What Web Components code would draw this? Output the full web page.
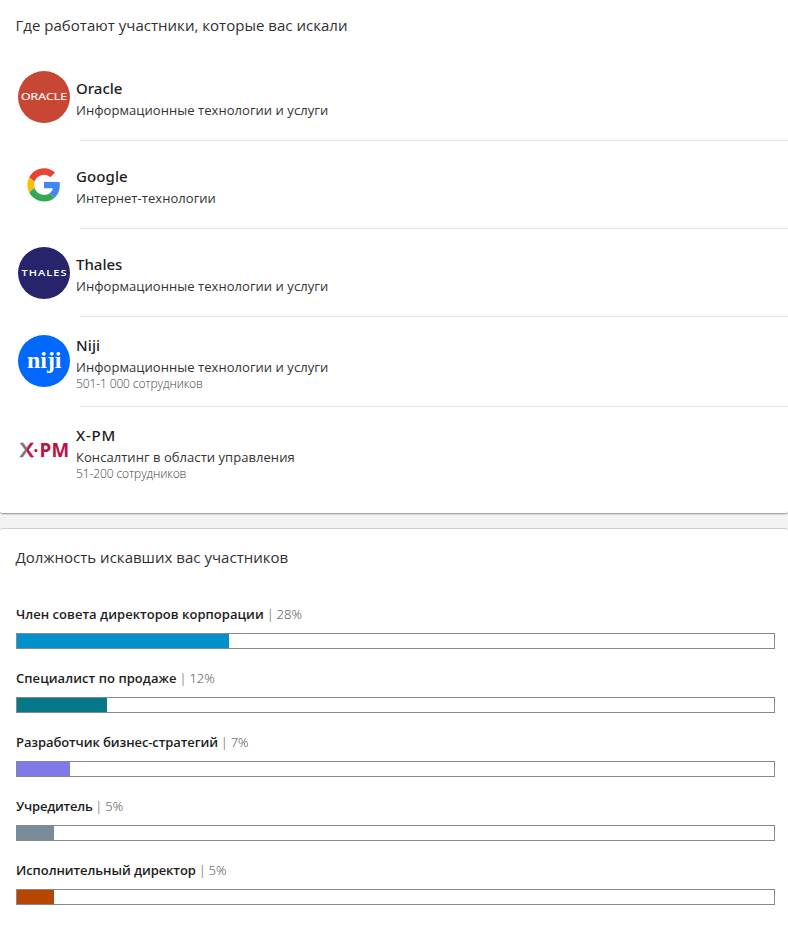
<!DOCTYPE html>
<html lang="ru">
<head>
<meta charset="utf-8">
<title>Статистика поиска</title>
<style>
  body {
    margin: 0;
    background: #f3f3f3;
    color: #1d1d1d;
    font-family: "Open Sans", "Noto Sans", sans-serif;
  }
</style>
</head>
<body>
<search-insights></search-insights>

<script>
const LOGOS = {
  oracle: `
    <circle cx="26" cy="26" r="26" fill="#c74634"/>
    <text x="3" y="29.2" font-size="8.4" textLength="46" lengthAdjust="spacingAndGlyphs" fill="#fff" stroke="#fff" stroke-width=".15">ORACLE</text>`,
  google: `
    <g transform="translate(9.4 9.3) scale(.69)">
      <path fill="#EA4335" d="M24 9.5c3.54 0 6.71 1.22 9.21 3.6l6.85-6.85C35.9 2.38 30.47 0 24 0 14.62 0 6.51 5.38 2.56 13.22l7.98 6.19C12.43 13.72 17.74 9.5 24 9.5z"/>
      <path fill="#4285F4" d="M46.98 24.55c0-1.57-.15-3.09-.38-4.55H24v9.02h12.94c-.58 2.96-2.26 5.48-4.78 7.18l7.73 6c4.51-4.18 7.09-10.36 7.09-17.65z"/>
      <path fill="#FBBC05" d="M10.53 28.59c-.48-1.45-.76-2.99-.76-4.59s.27-3.14.76-4.59l-7.98-6.19C.92 16.46 0 20.12 0 24c0 3.88.92 7.54 2.56 10.78l7.97-6.19z"/>
      <path fill="#34A853" d="M24 48c6.48 0 11.93-2.13 15.89-5.81l-7.73-6c-2.15 1.45-4.92 2.3-8.16 2.3-6.26 0-11.57-4.22-13.47-9.91l-7.98 6.19C6.51 42.62 14.62 48 24 48z"/>
    </g>`,
  thales: `
    <circle cx="26" cy="26" r="26" fill="#28246b"/>
    <text x="3.5" y="28.9" font-size="8.2" font-weight="600" letter-spacing=".8" textLength="46" lengthAdjust="spacingAndGlyphs" fill="#fff">THALES</text>`,
  niji: `
    <circle cx="26" cy="26" r="26" fill="#0068ff"/>
    <text x="9" y="32.7" font-family="Liberation Serif, serif" font-size="24" font-weight="700" textLength="34.5" lengthAdjust="spacingAndGlyphs" fill="#fff">niji</text>`,
  xpm: `
    <defs>
      <linearGradient id="x" x1="0" x2="1">
        <stop offset=".5" stop-color="#77777b"/>
        <stop offset=".5" stop-color="#c0103f"/>
      </linearGradient>
    </defs>
    <g font-family="Open Sans, sans-serif" font-size="19" font-weight="700">
      <text x="1.8" y="32" font-weight="600" textLength="14" lengthAdjust="spacingAndGlyphs" fill="url(#x)" stroke="url(#x)" stroke-width=".4">X</text>
      <text x="15.6" y="32" font-size="17" fill="#c0103f">·</text>
      <text x="21.6" y="32" textLength="29.5" lengthAdjust="spacingAndGlyphs" fill="#c0103f">PM</text>
    </g>`
};

class InsightCard extends HTMLElement {
  constructor() {
    super();
    this.attachShadow({ mode: 'open' });
    this.shadowRoot.innerHTML = `
      <style>
        :host {
          display: block;
          box-sizing: border-box;
          background: #fff;
          border-radius: 3px;
        }
        h2 {
          margin: 0 0 0 15.5px;
          font-size: 15px;
          font-weight: 400;
          line-height: 20px;
          letter-spacing: 0.02px;
          color: #303030;
          white-space: nowrap;
        }
      </style>
      <h2><slot name="heading"></slot></h2>
      <slot></slot>
    `;
  }
}

class CompanyRow extends HTMLElement {
  constructor() {
    super();
    this.attachShadow({ mode: 'open' });
  }

  connectedCallback() {
    const size = this.getAttribute('size');
    this.shadowRoot.innerHTML = `
      <style>
        :host {
          display: flex;
          box-sizing: border-box;
          height: ${size ? 90 : 88}px;
          gap: 6px;
          padding-left: 18px;
          background: linear-gradient(#e3e3e3, #e3e3e3) 80px 100% / 100% 1px no-repeat;
        }
        :host(:last-of-type) {
          background: none;
        }
        svg {
          flex: none;
          width: 52px;
          height: 52px;
          margin-top: 18px;
        }
        .info {
          padding-top: ${size ? 16 : 23}px;
          white-space: nowrap;
        }
        .name {
          font-family: "Noto Sans", "Open Sans", sans-serif;
          font-size: 15px;
          font-weight: 500;
          line-height: 24px;
          letter-spacing: var(--name-spacing, 0);
        }
        .industry {
          font-size: 13px;
          line-height: 20px;
          color: #333;
          letter-spacing: 0.05px;
        }
        .size {
          font-size: 12px;
          font-weight: 300;
          line-height: 14px;
          color: #444;
          letter-spacing: -0.12px;
        }
      </style>
      <svg viewBox="0 0 52 52" aria-hidden="true">${LOGOS[this.getAttribute('logo')]}</svg>
      <div class="info">
        <div class="name"><slot></slot></div>
        <div class="industry">${this.getAttribute('industry')}</div>
        ${size ? `<div class="size">${size}</div>` : ''}
      </div>
    `;
  }
}

class TitleBar extends HTMLElement {
  constructor() {
    super();
    this.attachShadow({ mode: 'open' });
  }

  connectedCallback() {
    const percent = this.getAttribute('percent');
    this.shadowRoot.innerHTML = `
      <style>
        :host {
          display: block;
          height: 64px;
          margin: 0 13px 0 16px;
        }
        .label {
          font-size: 13px;
          line-height: 20px;
          margin-bottom: 9px;
          white-space: nowrap;
        }
        .title {
          font-weight: 600;
          letter-spacing: var(--title-spacing, 0);
        }
        .percent {
          font-weight: 300;
          color: #444;
          word-spacing: -0.5px;
        }
        .track {
          box-sizing: border-box;
          height: 16px;
          border: 1px solid #86888a;
        }
        .fill {
          width: calc(${percent}% - 0.4px);
          height: 100%;
          background: ${this.getAttribute('color')};
        }
      </style>
      <div class="label"><span class="title"><slot></slot></span><span class="percent"> | ${percent}%</span></div>
      <div class="track"><div class="fill"></div></div>
    `;
  }
}

class SearchInsights extends HTMLElement {
  constructor() {
    super();
    this.attachShadow({ mode: 'open' });
    this.shadowRoot.innerHTML = `
      <style>
        :host {
          display: flex;
          flex-direction: column;
          gap: 14px;
          height: 925px;
          overflow: hidden;
        }
        .companies {
          height: 514px;
          padding-top: 15px;
          border-bottom: 1px solid #a6a6a6;
          border-top-left-radius: 0;
          border-top-right-radius: 0;
          box-shadow: 0 1px 1px #d5d5d5;
        }
        .titles {
          flex: 1;
          padding-top: 18px;
          border-top: 1px solid #cdcdcd;
          border-bottom-left-radius: 0;
          border-bottom-right-radius: 0;
        }
        .rows { margin-top: 18px; }
        .bars { margin-top: 37px; }
      </style>
      <insight-card class="companies">
        <span slot="heading">Где работают участники, которые вас искали</span>
        <div class="rows">
          <company-row logo="oracle" industry="Информационные технологии и услуги">Oracle</company-row>
          <company-row logo="google" industry="Интернет-технологии" style="--name-spacing: 0.1px">Google</company-row>
          <company-row logo="thales" industry="Информационные технологии и услуги">Thales</company-row>
          <company-row logo="niji" industry="Информационные технологии и услуги" size="501-1 000 сотрудников" style="--name-spacing: 0.1px">Niji</company-row>
          <company-row logo="xpm" industry="Консалтинг в области управления" size="51-200 сотрудников" style="--name-spacing: 0.8px">X-PM</company-row>
        </div>
      </insight-card>
      <insight-card class="titles">
        <span slot="heading">Должность искавших вас участников</span>
        <div class="bars">
          <title-bar percent="28" color="#0091ca" style="--title-spacing: 0.03px">Член совета директоров корпорации</title-bar>
          <title-bar percent="12" color="#077889" style="--title-spacing: 0.05px">Специалист по продаже</title-bar>
          <title-bar percent="7" color="#8079e8" style="--title-spacing: -0.1px">Разработчик бизнес-стратегий</title-bar>
          <title-bar percent="5" color="#788b98" style="--title-spacing: -0.24px">Учредитель</title-bar>
          <title-bar percent="5" color="#b74700" style="--title-spacing: -0.08px">Исполнительный директор</title-bar>
        </div>
      </insight-card>
    `;
  }
}

customElements.define('insight-card', InsightCard);
customElements.define('company-row', CompanyRow);
customElements.define('title-bar', TitleBar);
customElements.define('search-insights', SearchInsights);
</script>
</body>
</html>
